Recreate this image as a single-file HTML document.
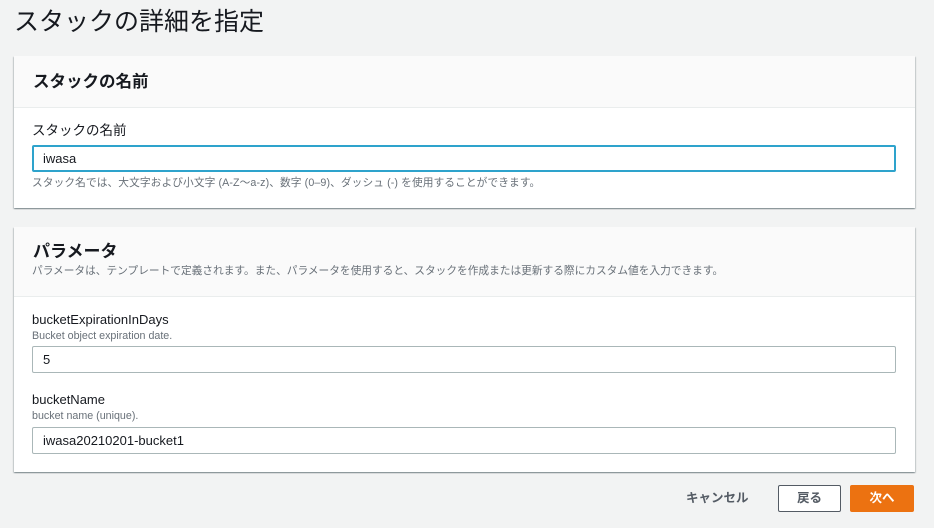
<!DOCTYPE html>
<html><head><meta charset="utf-8"><style>
*{margin:0;padding:0;box-sizing:border-box}
body{width:934px;height:528px;background:#f2f3f3;font-family:"Liberation Sans","Noto Sans CJK JP",sans-serif;color:#16191f;position:relative;overflow:hidden}
.a{position:absolute;white-space:nowrap}
.panel{position:absolute;left:14px;width:901px;background:#fff;box-shadow:0 1px 1px rgba(0,28,36,.3),1px 1px 1px rgba(0,28,36,.15),-1px 1px 1px rgba(0,28,36,.15)}
.hd{position:absolute;left:0;top:0;width:100%;background:#fafafa;border-bottom:1px solid #eaeded}
.inp{position:absolute;left:32px;width:864px;height:27px;border:1px solid #aab7b8;border-radius:2px;background:#fff;font-size:13px;padding-left:10px;line-height:25px}
.lbl{font-size:13px;color:#16191f}
.desc{font-size:10.7px;color:#687078}
</style></head><body>
<div class="a" style="left:14px;top:4px;font-size:25px;color:#16191f;line-height:36px">スタックの詳細を指定</div>

<div class="panel" style="top:56px;height:152px">
 <div class="hd" style="height:52px"></div>
</div>
<div class="a" style="left:33px;top:71px;font-size:16.5px;font-weight:bold;line-height:22px">スタックの名前</div>
<div class="a" style="left:32px;top:122px;line-height:18px;font-size:13.5px">スタックの名前</div>
<div class="inp" style="top:145px;border:2px solid #2ea3cc;padding-left:9px;line-height:23px">iwasa</div>
<div class="a desc" style="left:32px;top:176px;line-height:14px;letter-spacing:0.1px">スタック名では、大文字および小文字 (A-Z〜a-z)、数字 (0–9)、ダッシュ (-) を使用することができます。</div>

<div class="panel" style="top:227px;height:245px">
 <div class="hd" style="height:70px"></div>
</div>
<div class="a" style="left:33px;top:241px;font-size:17px;font-weight:bold;line-height:22px">パラメータ</div>
<div class="a desc" style="left:32px;top:264px;line-height:14px">パラメータは、テンプレートで定義されます。また、パラメータを使用すると、スタックを作成または更新する際にカスタム値を入力できます。</div>

<div class="a lbl" style="left:32px;top:311px;line-height:18px">bucketExpirationInDays</div>
<div class="a desc" style="left:32px;top:329px;line-height:14px">Bucket object expiration date.</div>
<div class="inp" style="top:346px">5</div>

<div class="a lbl" style="left:32px;top:391px;line-height:18px">bucketName</div>
<div class="a desc" style="left:32px;top:409px;line-height:14px">bucket name (unique).</div>
<div class="inp" style="top:427px">iwasa20210201-bucket1</div>

<div class="a" style="left:686px;top:490px;font-size:12.5px;font-weight:bold;color:#545b64;line-height:16px">キャンセル</div>
<div class="a" style="left:778px;top:485px;width:63px;height:27px;border:1px solid #545b64;border-radius:2px;background:#fff;font-size:12.5px;font-weight:bold;color:#545b64;text-align:center;line-height:25px">戻る</div>
<div class="a" style="left:850px;top:485px;width:64px;height:27px;border-radius:2px;background:#ec7211;font-size:12.5px;font-weight:bold;color:#fff;text-align:center;line-height:27px">次へ</div>
</body></html>
